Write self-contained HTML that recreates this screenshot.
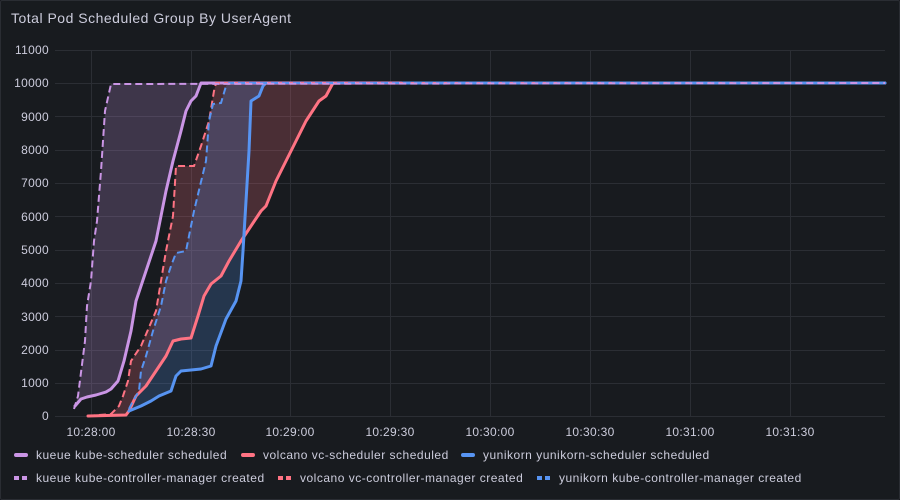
<!DOCTYPE html>
<html><head><meta charset="utf-8"><style>
html,body{margin:0;padding:0;background:#111217;}
.p{position:absolute;left:0;top:0;width:898px;height:498px;background:#181b1f;border:1px solid #2a2d33;border-radius:2px;font-family:"Liberation Sans",sans-serif;color:#ccccdc;overflow:hidden}
.t{position:absolute;left:10px;top:9px;font-size:14px;font-weight:500;letter-spacing:0.5px}
.lg{position:absolute;font-size:12px;white-space:nowrap;letter-spacing:0.5px}
.m{position:absolute;height:4px;border-radius:2px}
</style></head><body><div class="p">
<div class="t">Total Pod Scheduled Group By UserAgent</div>
<svg width="900" height="500" style="position:absolute;left:0;top:0" font-family="Liberation Sans, sans-serif" font-size="12" fill="#ccccdc">
<g stroke="#2b2e34" stroke-width="1">
<line x1="54" x2="884" y1="49.5" y2="49.5"/><line x1="54" x2="884" y1="82.5" y2="82.5"/><line x1="54" x2="884" y1="115.5" y2="115.5"/><line x1="54" x2="884" y1="149.5" y2="149.5"/><line x1="54" x2="884" y1="182.5" y2="182.5"/><line x1="54" x2="884" y1="215.5" y2="215.5"/><line x1="54" x2="884" y1="249.5" y2="249.5"/><line x1="54" x2="884" y1="282.5" y2="282.5"/><line x1="54" x2="884" y1="315.5" y2="315.5"/><line x1="54" x2="884" y1="349.5" y2="349.5"/><line x1="54" x2="884" y1="382.5" y2="382.5"/><line x1="54" x2="884" y1="415.5" y2="415.5"/>
<line x1="90.5" x2="90.5" y1="49" y2="415"/><line x1="190.5" x2="190.5" y1="49" y2="415"/><line x1="289.5" x2="289.5" y1="49" y2="415"/><line x1="389.5" x2="389.5" y1="49" y2="415"/><line x1="489.5" x2="489.5" y1="49" y2="415"/><line x1="589.5" x2="589.5" y1="49" y2="415"/><line x1="689.5" x2="689.5" y1="49" y2="415"/><line x1="789.5" x2="789.5" y1="49" y2="415"/>
</g>
<g text-anchor="end" letter-spacing="0.3"><text x="48" y="53">11000</text><text x="48" y="86">10000</text><text x="48" y="120">9000</text><text x="48" y="153">8000</text><text x="48" y="186">7000</text><text x="48" y="220">6000</text><text x="48" y="253">5000</text><text x="48" y="286">4000</text><text x="48" y="320">3000</text><text x="48" y="353">2000</text><text x="48" y="386">1000</text><text x="48" y="419">0</text></g>
<g text-anchor="middle" letter-spacing="0.3"><text x="90" y="435">10:28:00</text><text x="190" y="435">10:28:30</text><text x="289" y="435">10:29:00</text><text x="389" y="435">10:29:30</text><text x="489" y="435">10:30:00</text><text x="589" y="435">10:30:30</text><text x="689" y="435">10:31:00</text><text x="789" y="435">10:31:30</text></g>
<polygon fill="#ca95e5" fill-opacity="0.22" points="73,408 77,395 84,340 86,305 90,280 93,240 96,220 100,170 104,110 110,83 200,82 195,95 190,100 185,110 180,130 172,160 165,190 155,240 145,270 135,300 130,330 123,360 117,380 110,388 105,391 95,394 86,396 80,398 74,405"/>
<polygon fill="#ff7383" fill-opacity="0.22" points="87,415 110,413 118,405 122,395 127,380 130,360 140,345 155,310 165,250 172,215 175,165 193,165 200,145 208,120 213,90 215,82 332,82 325,95 318,100 305,120 295,140 285,160 275,180 265,205 260,210 250,225 240,240 228,260 220,275 210,283 203,295 197,315 190,337 180,338 172,340 165,355 155,370 145,385 135,395 128,410 125,414"/>
<polygon fill="#5794f2" fill-opacity="0.22" points="128,408 132,400 138,390 140,370 145,355 152,330 160,305 165,280 170,265 175,252 185,250 193,210 205,160 208,120 212,103 220,102 225,85 228,82 265,82 262,85 258,95 250,100 248,150 245,200 242,250 240,280 235,300 225,318 215,345 210,365 200,368 180,370 175,375 170,390 158,395 150,400 140,405 128,410"/>
<g fill="none" stroke-width="3" stroke-linejoin="round" stroke-linecap="round">
<polyline stroke="#ff7383" points="87,415 125,414 128,410 135,395 145,385 155,370 165,355 172,340 180,338 190,337 197,315 203,295 210,283 220,275 228,260 240,240 250,225 260,210 265,205 275,180 285,160 295,140 305,120 318,100 325,95 332,82 884,82"/>
<polyline stroke="#5794f2" points="128,410 140,405 150,400 158,395 170,390 175,375 180,370 200,368 210,365 215,345 225,318 235,300 240,280 242,250 245,200 248,150 250,100 258,95 262,85 265,82 884,82"/>
<polyline stroke="#ca95e5" points="74,405 80,398 86,396 95,394 105,391 110,388 117,380 123,360 130,330 135,300 145,270 155,240 165,190 172,160 180,130 185,110 190,100 195,95 200,82 400,82"/>
</g>
<g fill="none" stroke-width="2" stroke-dasharray="7,4">
<polyline stroke="#ff7383" points="87,415 110,413 118,405 122,395 127,380 130,360 140,345 155,310 165,250 172,215 175,165 193,165 200,145 208,120 213,90 215,82 884,82"/>
<polyline stroke="#5794f2" points="128,408 132,400 138,390 140,370 145,355 152,330 160,305 165,280 170,265 175,252 185,250 193,210 205,160 208,120 212,103 220,102 225,85 228,82 884,82"/>
<polyline stroke="#ca95e5" points="73,408 77,395 84,340 86,305 90,280 93,240 96,220 100,170 104,110 110,83 884,82"/>
</g>
</svg>
<div class="m" style="left:13px;top:452px;width:14px;background:#ca95e5"></div><div class="lg" style="left:35px;top:447px">kueue kube-scheduler scheduled</div>
<div class="m" style="left:240px;top:452px;width:14px;background:#ff7383"></div><div class="lg" style="left:262px;top:447px">volcano vc-scheduler scheduled</div>
<div class="m" style="left:460px;top:452px;width:14px;background:#5794f2"></div><div class="lg" style="left:482px;top:447px">yunikorn yunikorn-scheduler scheduled</div>
<div class="m" style="left:13px;top:475px;width:5px;border-radius:0;background:#ca95e5"></div><div class="m" style="left:21px;top:475px;width:5px;border-radius:0;background:#ca95e5"></div><div class="lg" style="left:35px;top:470px">kueue kube-controller-manager created</div>
<div class="m" style="left:277px;top:475px;width:5px;border-radius:0;background:#ff7383"></div><div class="m" style="left:285px;top:475px;width:5px;border-radius:0;background:#ff7383"></div><div class="lg" style="left:299px;top:470px">volcano vc-controller-manager created</div>
<div class="m" style="left:536px;top:475px;width:5px;border-radius:0;background:#5794f2"></div><div class="m" style="left:544px;top:475px;width:5px;border-radius:0;background:#5794f2"></div><div class="lg" style="left:558px;top:470px">yunikorn kube-controller-manager created</div>
</div></body></html>
